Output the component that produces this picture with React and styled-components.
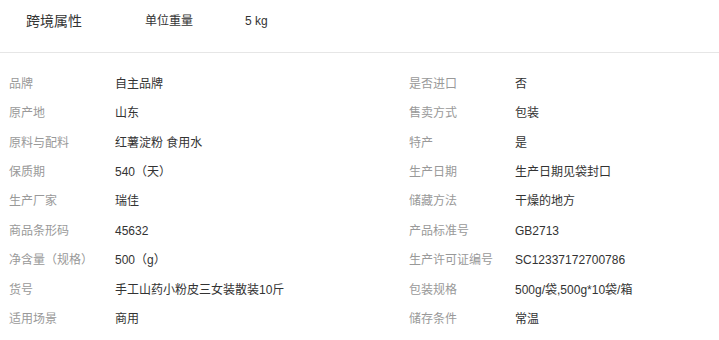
import React from "react";
import styled, { createGlobalStyle } from "styled-components";

const GlobalStyle = createGlobalStyle`
  body {
    margin: 0;
    background: #fff;
    font-family: "Liberation Sans", "Noto Sans CJK SC", sans-serif;
  }
`;

const Wrapper = styled.div`
  width: 719px;
`;

const TopBar = styled.div`
  display: flex;
  align-items: flex-start;
  height: 40px;
  padding: 12px 0 0 26px;
  box-sizing: content-box;
  border-bottom: 1px solid #e6e6e6;
  line-height: 18px;
  color: #333;
`;

const Title = styled.span`
  width: 119px;
  font-size: 14px;
`;

const TopKey = styled.span`
  width: 100px;
  font-size: 12px;
`;

const TopValue = styled.span`
  font-size: 12px;
`;

const Grid = styled.div`
  display: grid;
  grid-template-columns: 400px 310px;
  grid-auto-rows: 29.45px;
  padding: 16px 0 0 9px;
`;

const Row = styled.div`
  display: flex;
  align-items: center;
  font-size: 12px;
  line-height: 18px;
`;

const Label = styled.span`
  width: 106px;
  flex-shrink: 0;
  color: #999;
`;

const Value = styled.span`
  color: #333;
`;

const left = [
  ["品牌", "自主品牌"],
  ["原产地", "山东"],
  ["原料与配料", "红薯淀粉 食用水"],
  ["保质期", "540（天）"],
  ["生产厂家", "瑞佳"],
  ["商品条形码", "45632"],
  ["净含量（规格）", "500（g）"],
  ["货号", "手工山药小粉皮三女装散装10斤"],
  ["适用场景", "商用"],
];

const right = [
  ["是否进口", "否"],
  ["售卖方式", "包装"],
  ["特产", "是"],
  ["生产日期", "生产日期见袋封口"],
  ["储藏方法", "干燥的地方"],
  ["产品标准号", "GB2713"],
  ["生产许可证编号", "SC12337172700786"],
  ["包装规格", "500g/袋,500g*10袋/箱"],
  ["储存条件", "常温"],
];

export default function App() {
  const rows = [];
  left.forEach((item, i) => {
    rows.push(item, right[i]);
  });
  return (
    <Wrapper>
      <GlobalStyle />
      <TopBar>
        <Title>跨境属性</Title>
        <TopKey>单位重量</TopKey>
        <TopValue>5 kg</TopValue>
      </TopBar>
      <Grid>
        {rows.map(([label, value], i) => (
          <Row key={i}>
            <Label>{label}</Label>
            <Value>{value}</Value>
          </Row>
        ))}
      </Grid>
    </Wrapper>
  );
}
